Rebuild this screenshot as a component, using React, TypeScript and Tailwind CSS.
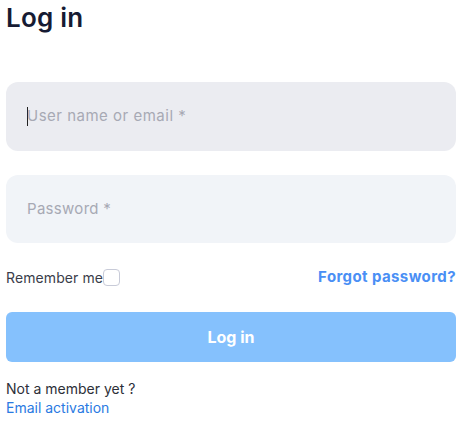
import React from "react";

export default function App() {
  return (
    <div className="w-[468px] h-[423px] bg-white font-['Inter',sans-serif] overflow-hidden">
      <div className="w-[450px] ml-[6px] flex flex-col">
        <h1 className="text-[26px] leading-[36px] font-semibold text-[#161b33] mt-0 tracking-[0.2px]">Log in</h1>
        <div className="mt-[46px] h-[69px] rounded-[12px] bg-[#ebecf1] flex items-center pl-[21px]">
          <span className="w-px h-[19px] bg-[#222] mr-[-1px]" />
          <span className="text-[15px] tracking-[0.5px] text-[#a7a9b4]">User name or email *</span>
        </div>
        <div className="mt-[24px] h-[68px] rounded-[12px] bg-[#f1f4f8] flex items-center pl-[21px]">
          <span className="text-[15px] tracking-[0.3px] text-[#a7a9b4]">Password *</span>
        </div>
        <div className="mt-[26px] h-[16px] flex items-center justify-between">
          <div className="flex items-center">
            <span className="text-[14px] tracking-[0.1px] text-[#3a3d4a]">Remember me</span>
            <span className="w-[17px] h-[17px] rounded-[4px] border border-[#c8cbd8] bg-white" />
          </div>
          <span className="text-[15px] font-bold tracking-[0.4px] text-[#4a8ff5]">Forgot password?</span>
        </div>
        <div className="mt-[27px] h-[50px] rounded-[6px] bg-[#85c1fd] flex items-center justify-center">
          <span className="text-[16px] font-bold text-white">Log in</span>
        </div>
        <div className="mt-[17px] text-[14px] leading-[19px] text-[#2d2f38]">Not a member yet ?</div>
        <div className="text-[14px] leading-[19px] text-[#2a7ae2]">Email activation</div>
      </div>
    </div>
  );
}
